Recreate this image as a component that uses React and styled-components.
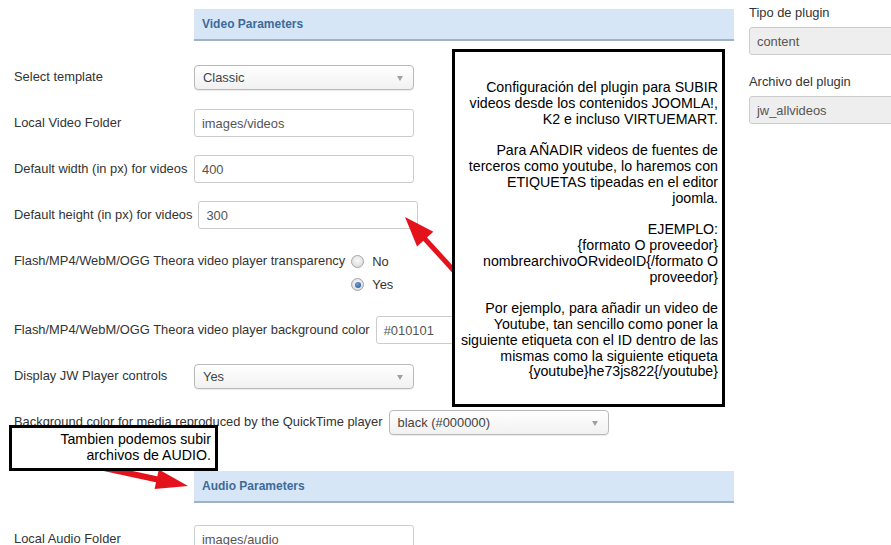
import React from "react";
import styled, { createGlobalStyle } from "styled-components";

const Global = createGlobalStyle`
  html, body { margin: 0; padding: 0; background: #fff; }
  body { font-family: "Liberation Sans", Arial, sans-serif; }
`;

const Page = styled.div`
  position: relative;
  width: 891px;
  height: 545px;
  overflow: hidden;
  display: flex;
  align-items: flex-start;
  background: #fff;
`;

const Main = styled.div`
  width: 734px;
  flex-shrink: 0;
  box-sizing: border-box;
  padding: 9px 0 0 14px;
  display: flex;
  flex-direction: column;
`;

const Section = styled.section`
  display: flex;
  flex-direction: column;
  margin-top: ${(p) => (p.$first ? 0 : 35)}px;
`;

const SectionHeader = styled.div`
  margin-left: 180px;
  height: 30px;
  padding-left: 8px;
  display: flex;
  align-items: center;
  background: #d6e6f7;
  border-bottom: 2px solid #9fb2c7;
  font-size: 12px;
  font-weight: bold;
  color: #3e6a98;
`;

const FieldList = styled.div`
  margin-top: 22px;
  display: flex;
  flex-direction: column;
  gap: 18px;
`;

const Row = styled.div`
  display: flex;
  align-items: ${(p) => (p.$top ? "flex-start" : "center")};
  min-height: 28px;
`;

const Label = styled.label`
  flex-shrink: 0;
  min-width: 180px;
  box-sizing: border-box;
  padding-right: 6px;
  font-size: 12.9px;
  line-height: 28px;
  color: #333;
  white-space: nowrap;
`;

const TextInput = styled.div`
  width: 220px;
  height: 28px;
  box-sizing: border-box;
  flex-shrink: 0;
  border: 1px solid #ccc;
  border-radius: 3px;
  background: ${(p) => (p.$readonly ? "#eeeeee" : "#fff")};
  padding: 0 7px;
  display: flex;
  align-items: center;
  font-size: 12.9px;
  color: #555;
  white-space: nowrap;
  overflow: hidden;
`;

const SelectBox = styled.div`
  position: relative;
  width: 220px;
  height: 25px;
  box-sizing: border-box;
  flex-shrink: 0;
  border: 1px solid #b9b9b9;
  border-radius: 4px;
  background: linear-gradient(#ffffff, #f1f1f1);
  box-shadow: 0 1px 1px rgba(0, 0, 0, 0.08);
  padding: 0 8px;
  display: flex;
  align-items: center;
  font-size: 12.9px;
  color: #444;

  &::after {
    content: "";
    position: absolute;
    right: 10px;
    top: 10px;
    border-left: 3.5px solid transparent;
    border-right: 3.5px solid transparent;
    border-top: 5px solid #a0a0a0;
  }
`;

const RadioList = styled.div`
  display: flex;
  flex-direction: column;
  padding: 3px 0 2px;
`;

const RadioItem = styled.div`
  display: flex;
  align-items: center;
  height: 23px;
  font-size: 12.9px;
  color: #333;
`;

const RadioDot = styled.span`
  position: relative;
  width: 11px;
  height: 11px;
  border-radius: 50%;
  border: 1px solid #a4a4a4;
  background: radial-gradient(circle at 50% 40%, #fafafa, #d4d4d4);
  margin-right: 8px;

  &::after {
    content: "";
    display: ${(p) => (p.$checked ? "block" : "none")};
    position: absolute;
    left: 2.5px;
    top: 2.5px;
    width: 6px;
    height: 6px;
    border-radius: 50%;
    background: radial-gradient(circle at 40% 35%, #6fa3dd, #1d4d86);
  }
`;

const Side = styled.aside`
  margin-left: 15px;
  padding-top: 4px;
  display: flex;
  flex-direction: column;
`;

const SideLabel = styled.div`
  font-size: 12.9px;
  line-height: 18px;
  color: #333;
  margin-bottom: 5px;
`;

const SideField = styled.div`
  margin-bottom: 18px;
`;

const Note = styled.div`
  position: absolute;
  left: ${(p) => p.$left}px;
  top: ${(p) => p.$top}px;
  width: ${(p) => p.$width}px;
  height: ${(p) => p.$height}px;
  box-sizing: border-box;
  border: 3px solid #000;
  background: #fff;
  padding: ${(p) => p.$padTop}px 4px 0 0;
  text-align: right;
  font-family: "Liberation Sans", Arial, sans-serif;
  font-size: 14.2px;
  line-height: 15.8px;
  color: #000;
  white-space: nowrap;
`;

const NotePara = styled.p`
  margin: 0 0 15.8px;
  &:last-child { margin-bottom: 0; }
`;

const ArrowLayer = styled.svg`
  position: absolute;
  left: 0;
  top: 0;
  pointer-events: none;
`;

function Arrow({ x1, y1, x2, y2, head = 30, half = 11, width = 5, color = "#e4121b" }) {
  const dx = x2 - x1;
  const dy = y2 - y1;
  const len = Math.hypot(dx, dy);
  const ux = dx / len;
  const uy = dy / len;
  const bx = x2 - ux * head;
  const by = y2 - uy * head;
  const px = -uy;
  const py = ux;
  const pts = `${x2},${y2} ${bx + px * half},${by + py * half} ${bx - px * half},${by - py * half}`;
  return (
    <g>
      <line x1={x1} y1={y1} x2={bx + ux * 2} y2={by + uy * 2} stroke={color} strokeWidth={width} />
      <polygon points={pts} fill={color} />
    </g>
  );
}

const Field = ({ label, children, top }) => (
  <Row $top={top}>
    <Label>{label}</Label>
    {children}
  </Row>
);

export default function App() {
  return (
    <>
      <Global />
      <Page>
        <Main>
          <Section $first>
            <SectionHeader>Video Parameters</SectionHeader>
            <FieldList>
              <Field label="Select template">
                <SelectBox>Classic</SelectBox>
              </Field>
              <Field label="Local Video Folder">
                <TextInput>images/videos</TextInput>
              </Field>
              <Field label="Default width (in px) for videos">
                <TextInput>400</TextInput>
              </Field>
              <Field label="Default height (in px) for videos">
                <TextInput>300</TextInput>
              </Field>
              <Field label="Flash/MP4/WebM/OGG Theora video player transparency" top>
                <RadioList>
                  <RadioItem>
                    <RadioDot />
                    No
                  </RadioItem>
                  <RadioItem>
                    <RadioDot $checked />
                    Yes
                  </RadioItem>
                </RadioList>
              </Field>
              <Field label="Flash/MP4/WebM/OGG Theora video player background color">
                <TextInput>#010101</TextInput>
              </Field>
              <Field label="Display JW Player controls">
                <SelectBox>Yes</SelectBox>
              </Field>
              <Field label="Background color for media reproduced by the QuickTime player">
                <SelectBox>black (#000000)</SelectBox>
              </Field>
            </FieldList>
          </Section>
          <Section>
            <SectionHeader>Audio Parameters</SectionHeader>
            <FieldList>
              <Field label="Local Audio Folder">
                <TextInput>images/audio</TextInput>
              </Field>
            </FieldList>
          </Section>
        </Main>
        <Side>
          <SideField>
            <SideLabel>Tipo de plugin</SideLabel>
            <TextInput $readonly>content</TextInput>
          </SideField>
          <SideField>
            <SideLabel>Archivo del plugin</SideLabel>
            <TextInput $readonly>jw_allvideos</TextInput>
          </SideField>
        </Side>

        <ArrowLayer width="891" height="545" viewBox="0 0 891 545">
          <Arrow x1={456} y1={273} x2={405} y2={217} head={30} half={11} width={5} />
          <Arrow x1={95} y1={466} x2={188} y2={486} head={32} half={10} width={6} />
        </ArrowLayer>

        <Note $left={452} $top={49} $width={273} $height={358} $padTop={28}>
          <NotePara>
            Configuración del plugin para SUBIR
            <br />
            videos desde los contenidos JOOMLA!,
            <br />
            K2 e incluso VIRTUEMART.
          </NotePara>
          <NotePara>
            Para AÑADIR videos de fuentes de
            <br />
            terceros como youtube, lo haremos con
            <br />
            ETIQUETAS tipeadas en el editor
            <br />
            joomla.
          </NotePara>
          <NotePara>
            EJEMPLO:
            <br />
            {"{formato O proveedor}"}
            <br />
            {"nombrearchivoORvideoID{/formato O"}
            <br />
            {"proveedor}"}
          </NotePara>
          <NotePara>
            Por ejemplo, para añadir un video de
            <br />
            Youtube, tan sencillo como poner la
            <br />
            siguiente etiqueta con el ID dentro de las
            <br />
            mismas como la siguiente etiqueta
            <br />
            {"{youtube}he73js822{/youtube}"}
          </NotePara>
        </Note>

        <Note $left={9} $top={425} $width={209} $height={46} $padTop={4}>
          Tambien podemos subir
          <br />
          archivos de AUDIO.
        </Note>
      </Page>
    </>
  );
}
